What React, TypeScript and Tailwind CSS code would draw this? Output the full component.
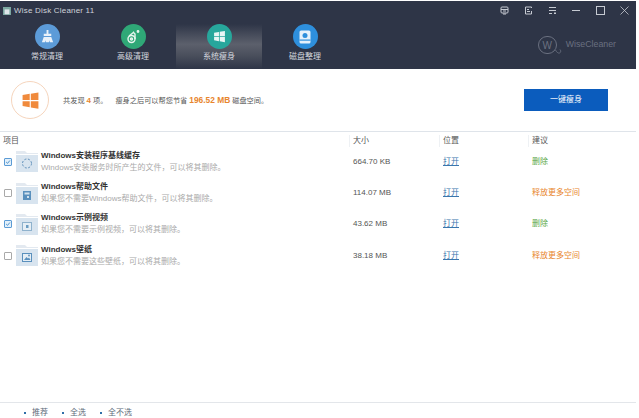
import type { ReactNode } from 'react';

const FONT = "font-['Liberation_Sans','Noto_Sans_CJK_SC',sans-serif]";

function WinLogo({ className }: { className: string }) {
  return (
    <svg viewBox="0 0 24 24" className={className} fill="currentColor">
      <path d="M2 5.2 11 3.6V11.4H2ZM12.4 3.4 22 1.8V11.4H12.4ZM2 12.8H11V20.6L2 19ZM12.4 12.8H22V22.4L12.4 20.8Z" />
    </svg>
  );
}

function NavItem({ label, bg, active, children }: { label: string; bg: string; active?: boolean; children: ReactNode }) {
  return (
    <div className={`mt-[4px] flex h-[45px] w-[86px] flex-col items-center ${active ? 'bg-[linear-gradient(180deg,#2e3547,#5c606c_45%,#4a4f5c_70%,#2e3547)]' : ''}`}>
      <div className={`flex h-[25px] w-[25px] items-center justify-center rounded-full ${bg}`}>{children}</div>
      <span className="mt-[2px] text-[8px] leading-[12px] text-[#d5d8de]">{label}</span>
    </div>
  );
}

const rows = [
  { title: 'Windows安装程序基线缓存', desc: 'Windows安装服务时所产生的文件，可以将其删除。', size: '664.70 KB', tip: '删除', green: true, checked: true, icon: 'ring' },
  { title: 'Windows帮助文件', desc: '如果您不需要Windows帮助文件，可以将其删除。', size: '114.07 MB', tip: '释放更多空间', green: false, checked: false, icon: 'help' },
  { title: 'Windows示例视频', desc: '如果您不需要示例视频，可以将其删除。', size: '43.62 MB', tip: '删除', green: true, checked: true, icon: 'video' },
  { title: 'Windows壁纸', desc: '如果您不需要这些壁纸，可以将其删除。', size: '38.18 MB', tip: '释放更多空间', green: false, checked: false, icon: 'pic' },
];

function FolderIcon({ kind }: { kind: string }) {
  return (
    <svg viewBox="0 0 22 21" className="h-[21px] w-[22px] shrink-0">
      <path d="M0 0H9L11 2H22V3H0Z" fill="#e3e9f0" />
      <rect x="0" y="4" width="22" height="17" fill="#d8e4ef" />
      {kind === 'ring' && <circle cx="11" cy="12.5" r="4.5" fill="none" stroke="#5b8db8" strokeWidth="1" strokeDasharray="2 1.6" />}
      {kind === 'help' && (
        <g>
          <rect x="7" y="8" width="8" height="9" fill="#5a90bd" />
          <rect x="8.5" y="9.5" width="5" height="2" fill="#d3e1ed" />
          <rect x="11" y="13" width="2" height="2" fill="#d3e1ed" />
        </g>
      )}
      {kind === 'video' && (
        <g>
          <rect x="6.5" y="8.5" width="9" height="8" fill="#e5eef5" stroke="#8fb2cd" />
          <rect x="10" y="11" width="2.5" height="3" fill="#6b9cc2" />
        </g>
      )}
      {kind === 'pic' && (
        <g>
          <rect x="6.5" y="8.5" width="9" height="8" fill="#e5eef5" stroke="#5a90bd" />
          <path d="M8 15 10.5 12 12 13.5 13 12.5 14.5 15Z" fill="#5a90bd" />
          <circle cx="13" cy="10.5" r="0.9" fill="#5a90bd" />
        </g>
      )}
    </svg>
  );
}

function Check({ on }: { on: boolean }) {
  return (
    <div className={`flex h-[8px] w-[8px] shrink-0 items-center justify-center rounded-[1px] border ${on ? 'border-[#5b9bd5] bg-[#e3f0fa]' : 'border-[#a9a9a9] bg-white'}`}>
      {on && (
        <svg viewBox="0 0 8 8" className="h-[8px] w-[8px]" fill="none" stroke="#2f7fc4" strokeWidth="1.1">
          <path d="M1.5 4 3.4 5.8 6.5 2" />
        </svg>
      )}
    </div>
  );
}

function TopIcon({ children }: { children: ReactNode }) {
  return <div className="flex w-[24px] justify-center">{children}</div>;
}

export default function App() {
  return (
    <div className={`${FONT} flex h-[418px] w-[639px] flex-col bg-white pt-[1px] pr-[3px]`}>
      {/* Title bar + nav */}
      <div className="h-[68px] bg-[#2e3547]">
        <div className="flex h-[19px] items-center pl-[3px]">
          <svg viewBox="0 0 10 10" className="h-[8px] w-[8px]">
            <rect width="10" height="10" fill="#7ba7a0" />
            <rect x="2" y="3" width="6" height="6" fill="#dfe6ea" />
          </svg>
          <span className="ml-[3px] text-[8px] tracking-[0.2px] text-[#cfd3da]">Wise Disk Cleaner 11</span>
          <div className="ml-auto flex items-center text-[#c6cad2]">
            <TopIcon><svg viewBox="0 0 9 9" className="h-[9px] w-[9px]" fill="none" stroke="currentColor"><rect x="1" y="1" width="7" height="6" rx="1" /><path d="M1 3.5H8M3 5H6M3 8H6" /></svg></TopIcon>
            <TopIcon><svg viewBox="0 0 9 9" className="h-[9px] w-[9px]" fill="none" stroke="currentColor"><path d="M7.5 2V1H1.5V8H7.5V5M3 3.5H5M3 5.5H6" /></svg></TopIcon>
            <TopIcon><svg viewBox="0 0 9 9" className="h-[9px] w-[9px]" fill="none" stroke="currentColor"><path d="M1 1.5H8M1 4.5H8M1 7.5H4" /><rect x="6" y="6.5" width="2" height="1.5" fill="currentColor" stroke="none" /></svg></TopIcon>
            <TopIcon><span className="h-[1px] w-[8px] bg-current" /></TopIcon>
            <TopIcon><span className="h-[9px] w-[9px] border border-current" /></TopIcon>
            <TopIcon><svg viewBox="0 0 9 9" className="h-[9px] w-[9px]" fill="none" stroke="currentColor" strokeWidth="0.8"><path d="M.5.5 8.5 8.5M8.5.5 .5 8.5" /></svg></TopIcon>
          </div>
        </div>
        <div className="flex items-start pl-[4px]">
          <NavItem label="常规清理" bg="bg-[#5c9bd8]">
            <svg viewBox="0 0 16 16" className="h-[15px] w-[15px]" fill="#e8f1fa"><path d="M7 1h2v4h3v2.5H4V5h3ZM4 8.5h8L14 14H10.5L10 12 9.5 14H6.5L6 12 5.5 14H2Z" /></svg>
          </NavItem>
          <NavItem label="高级清理" bg="bg-[#2fa877]">
            <svg viewBox="0 0 16 16" className="h-[16px] w-[16px]" fill="none" stroke="#e8f5ef" strokeWidth="1.4"><circle cx="6.5" cy="10" r="3.5" /><circle cx="6.5" cy="10" r="1" /><path d="M9 3 4 7M10 10V5L8 3" /><circle cx="13" cy="2.5" r="0.7" fill="#e8f5ef" /></svg>
          </NavItem>
          <NavItem label="系统瘦身" bg="bg-[#27a79c]" active>
            <WinLogo className="h-[13px] w-[13px] text-[#e8f6f5]" />
          </NavItem>
          <NavItem label="磁盘整理" bg="bg-[#2e8fdc]">
            <svg viewBox="0 0 16 16" className="h-[16px] w-[16px]"><rect x="2.5" y="1.5" width="11" height="13" rx="1.5" fill="#e6f1fb" /><circle cx="8" cy="6.5" r="2.5" fill="#2e8fdc" /><rect x="2.5" y="10.5" width="11" height="1.2" fill="#2e8fdc" /></svg>
          </NavItem>
          <div className="ml-auto mt-[16px] flex items-center pr-[20px] text-[#6a7080]">
            <div className="relative flex h-[18px] w-[19px] items-center justify-center rounded-full border border-[#6a7080] text-[10px]">
              W
              <svg viewBox="0 0 7 7" className="absolute top-[10px] left-[16px] h-[7px] w-[7px]" fill="none" stroke="currentColor" strokeWidth="0.9">
                <path d="M0.5 3C1.5 5 3 6.5 4.5 6 6 5.5 6 3.5 5 2.5" />
              </svg>
            </div>
            <span className="ml-[9px] text-[8.8px]">WiseCleaner</span>
          </div>
        </div>
      </div>

      {/* Summary */}
      <div className="flex h-[63px] items-center border-b border-[#dfe4ea] pl-[11px] pr-[28px]">
        <div className="flex h-[38px] w-[38px] items-center justify-center rounded-full border border-[#f6d5bd]">
          <WinLogo className="h-[19px] w-[19px] text-[#f08a3c]" />
        </div>
        <p className="ml-[14px] text-[7.2px] text-[#555]">
          共发现 <b className="text-[8px] text-[#e8862e]">4</b> 项。<span className="ml-[8px]">瘦身之后可以帮您节省</span> <b className="text-[8.4px] text-[#e8862e]">196.52 MB</b> 磁盘空间。
        </p>
        <button className="ml-auto h-[22px] w-[84px] bg-[#0b5cbd] text-[8px] text-white">一键瘦身</button>
      </div>

      {/* Table */}
      <div className="flex-1 text-[8px]">
        <div className="flex h-[14px] items-center pt-[3px] text-[#555]">
          <span className="w-[349px] pl-[3px]">项目</span>
          <span className="w-[90px] border-l border-[#eef1f4] pl-[3px]">大小</span>
          <span className="w-[89px] border-l border-[#eef1f4] pl-[3px]">位置</span>
          <span className="w-[104px] border-l border-[#eef1f4] pl-[3px]">建议</span>
        </div>
        {rows.map((r) => (
          <div key={r.title} className="flex h-[31.4px] items-center">
            <div className="flex w-[349px] items-center pl-[4px]">
              <Check on={r.checked} />
              <div className="ml-[4px]"><FolderIcon kind={r.icon} /></div>
              <div className="ml-[3px] min-w-0">
                <div className="text-[8px] leading-[12px] font-bold text-[#333]">{r.title}</div>
                <div className="text-[8px] leading-[12px] text-[#aaa]">{r.desc}</div>
              </div>
            </div>
            <span className="w-[90px] pl-[4px] text-[#555]">{r.size}</span>
            <span className="w-[89px] pl-[4px]"><span className="text-[#3a76ad] underline">打开</span></span>
            <span className={`pl-[4px] ${r.green ? 'text-[#5aa845]' : 'text-[#e8862e]'}`}>{r.tip}</span>
          </div>
        ))}
      </div>

      {/* Footer */}
      <div className="flex h-[16px] items-center gap-[14px] border-t border-[#e3e6ea] pt-[5px] pl-[24px] text-[8px] text-[#5d6b7a]">
        {['推荐', '全选', '全不选'].map((t) => (
          <span key={t} className="flex items-center gap-[6px]">
            <span className="h-[2px] w-[2px] bg-[#2f6fa8]" />
            {t}
          </span>
        ))}
      </div>
    </div>
  );
}
